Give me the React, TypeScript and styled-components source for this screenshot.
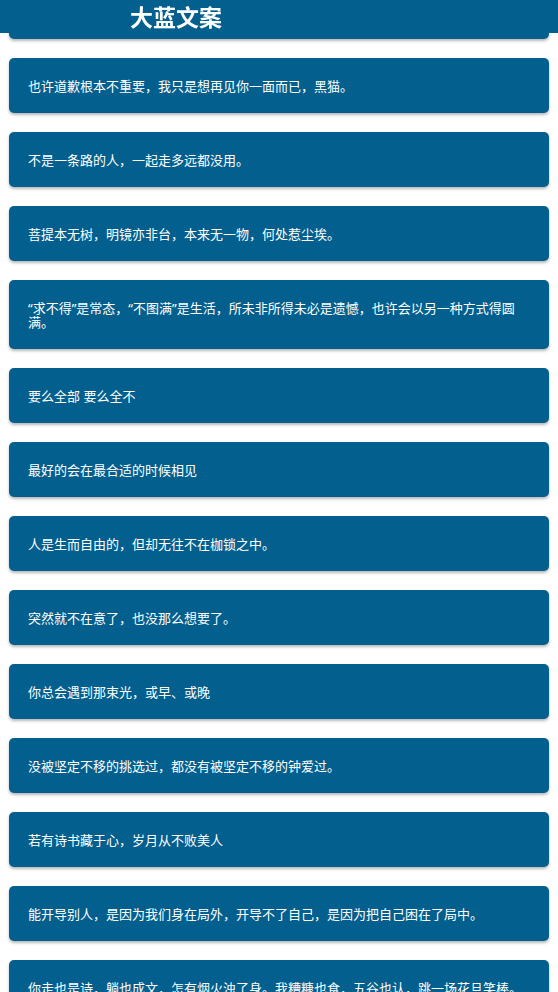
import styled, { createGlobalStyle } from "styled-components";

const GlobalStyle = createGlobalStyle`
  html, body {
    margin: 0;
    padding: 0;
    background: #ffffff;
    font-family: "Noto Sans", "Noto Sans CJK SC", sans-serif;
  }
`

const Header = styled.div`
  position: fixed;
  top: 0;
  left: 0;
  right: 0;
  height: 33px;
  z-index: 10;
  background-color: #035f8d;
  display: flex;
  align-items: center;
  padding-left: 130px;

  .header-title {
    color: #ffffff;
    font-family: "Noto Sans CJK SC", sans-serif;
    font-size: 23px;
    font-weight: bold;
    line-height: 33px;
  }
`

const List = styled.div`
  display: flex;
  flex-direction: column;
  gap: 19px;
  padding: 0 9px 40px;
  margin-top: -16px;
`

const Card = styled.div`
  background-color: #035f8d;
  border-radius: 5px;
  box-shadow: 0 2px 3px rgba(0, 0, 0, 0.28);
  padding: 21px 19px 20px;
  color: #ffffff;
  font-size: 13px;
  line-height: 14px;
`

const quotes = [
  "你若安好，便是晴天。",
  "也许道歉根本不重要，我只是想再见你一面而已，黑猫。",
  "不是一条路的人，一起走多远都没用。",
  "菩提本无树，明镜亦非台，本来无一物，何处惹尘埃。",
  "“求不得”是常态，“不图满”是生活，所未非所得未必是遗憾，也许会以另一种方式得圆满。",
  "要么全部 要么全不",
  "最好的会在最合适的时候相见",
  "人是生而自由的，但却无往不在枷锁之中。",
  "突然就不在意了，也没那么想要了。",
  "你总会遇到那束光，或早、或晚",
  "没被坚定不移的挑选过，都没有被坚定不移的钟爱过。",
  "若有诗书藏于心，岁月从不败美人",
  "能开导别人，是因为我们身在局外，开导不了自己，是因为把自己困在了局中。",
  "你走也是诗，躺也成文，怎有烟火浊了身。我糟糠也食，五谷也认，跳一场花旦笑棒。",
];

function App() {
  return (
    <>
      <GlobalStyle />
      <Header>
        <div className="header-title">大蓝文案</div>
      </Header>
      <List>
        {quotes.map((q, i) => (
          <Card key={i}>{q}</Card>
        ))}
      </List>
    </>
  );
}

export default App;
